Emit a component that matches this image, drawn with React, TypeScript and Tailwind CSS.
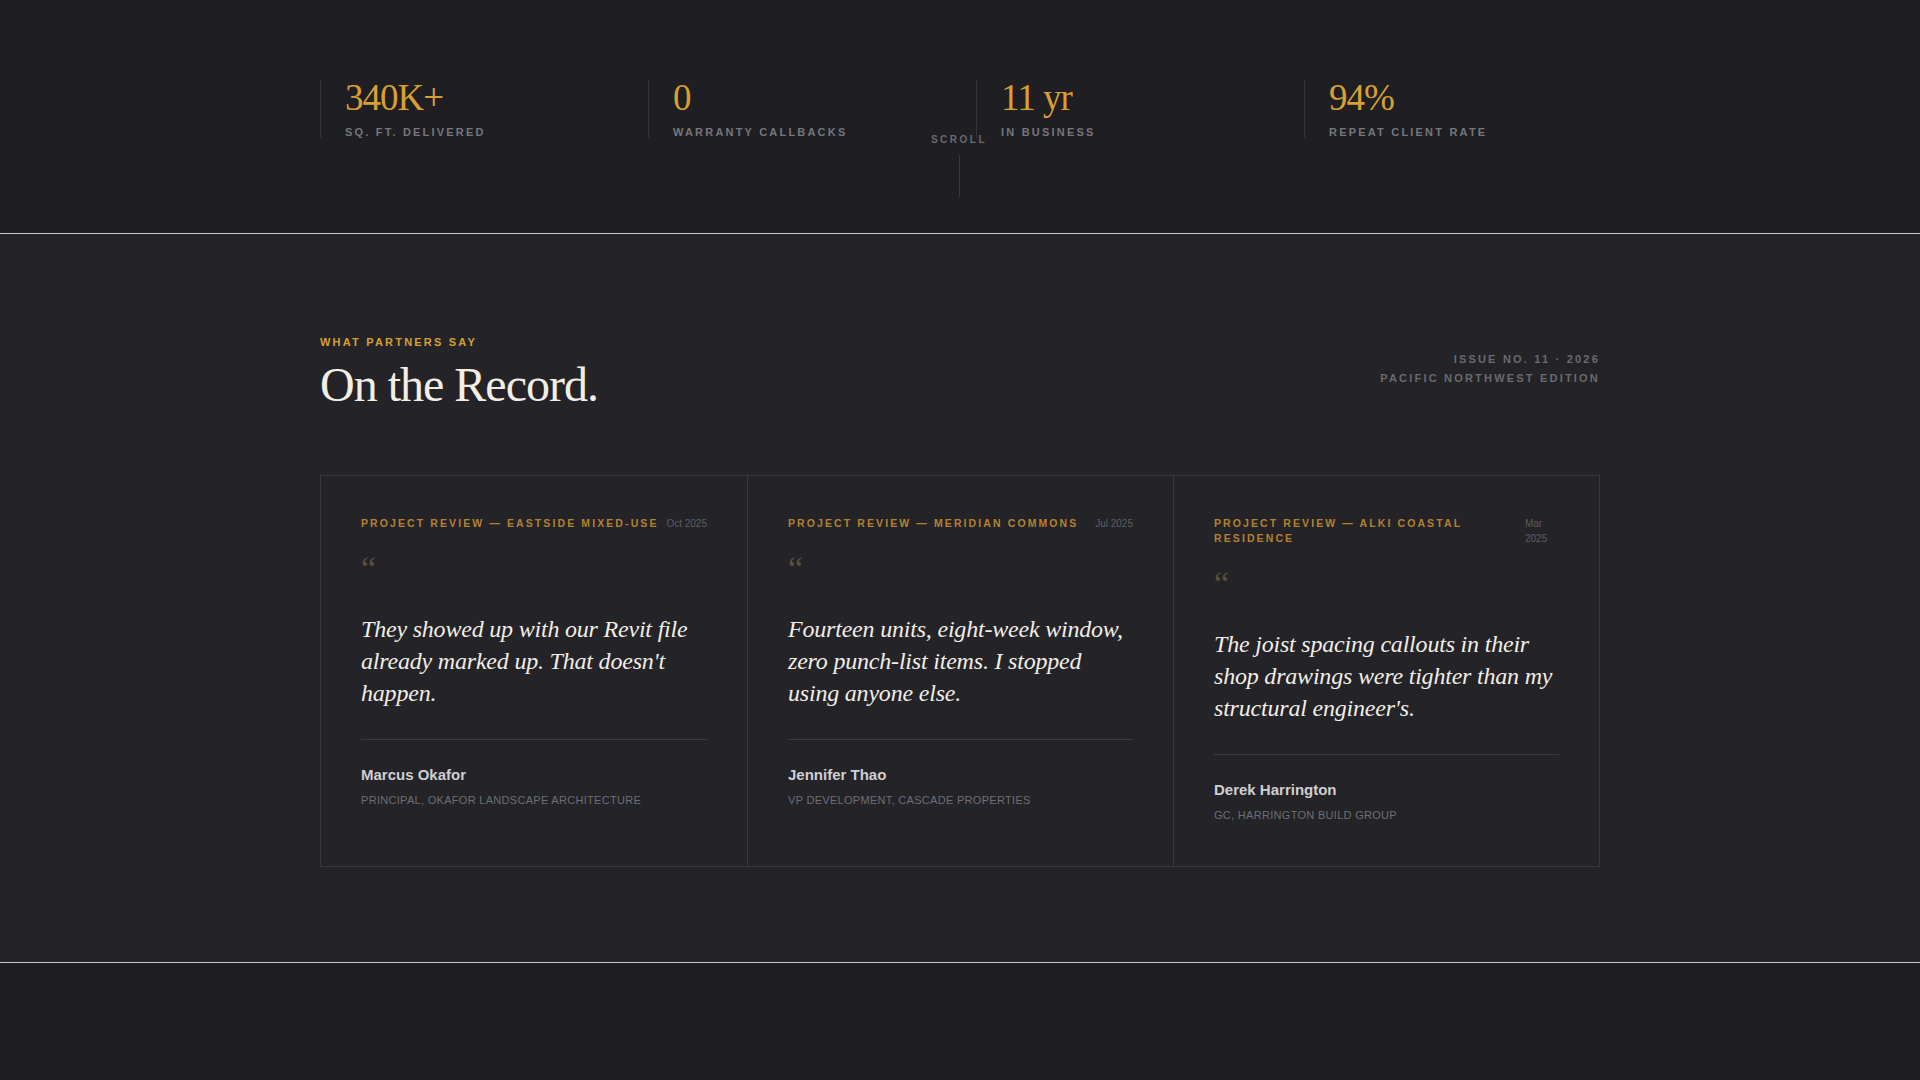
import React from 'react';

const stats = [
  { value: '340K+', label: 'SQ. FT. DELIVERED' },
  { value: '0', label: 'WARRANTY CALLBACKS' },
  { value: '11 yr', label: 'IN BUSINESS' },
  { value: '94%', label: 'REPEAT CLIENT RATE' },
];

const reviews = [
  {
    project: 'PROJECT REVIEW — EASTSIDE MIXED-USE',
    date: 'Oct 2025',
    quote: "They showed up with our Revit file already marked up. That doesn't happen.",
    name: 'Marcus Okafor',
    role: 'PRINCIPAL, OKAFOR LANDSCAPE ARCHITECTURE',
  },
  {
    project: 'PROJECT REVIEW — MERIDIAN COMMONS',
    date: 'Jul 2025',
    quote: 'Fourteen units, eight-week window, zero punch-list items. I stopped using anyone else.',
    name: 'Jennifer Thao',
    role: 'VP DEVELOPMENT, CASCADE PROPERTIES',
  },
  {
    project: 'PROJECT REVIEW — ALKI COASTAL RESIDENCE',
    date: 'Mar 2025',
    quote: "The joist spacing callouts in their shop drawings were tighter than my structural engineer's.",
    name: 'Derek Harrington',
    role: 'GC, HARRINGTON BUILD GROUP',
  },
];

const serif = { fontFamily: '"Liberation Serif", serif' };

export default function App() {
  return (
    <div className="min-h-[1080px] bg-[#1d1d22]" style={{ fontFamily: '"Liberation Sans", Arial, sans-serif' }}>
      {/* stats */}
      <section className="relative h-[234px] bg-[#1e1e23] border-b border-[#c9c9cc]">
        <div className="ml-[320px] pt-[80px] flex">
          {stats.map((s) => (
            <div key={s.label} className="w-[328px] border-l border-[#34343a] pl-6 h-[58px]">
              <div className="text-[37px] leading-[36px] text-[#d8a032] tracking-[-1px]" style={serif}>{s.value}</div>
              <div className="mt-[8px] text-[11px] font-bold tracking-[2.2px] text-[#76767c]">{s.label}</div>
            </div>
          ))}
        </div>
        <div className="absolute left-[934px] top-[132px] flex flex-col items-center w-[50px]">
          <span className="text-[10px] font-bold tracking-[2.5px] text-[#6a6a70]">SCROLL</span>
          <div className="mt-[8px] w-px h-[42px] bg-[#3a3a40]" />
        </div>
      </section>

      {/* testimonials */}
      <section className="h-[729px] bg-[#232328] border-b border-[#c9c9cc]">
        <div className="mx-auto w-[1280px]">
          <div className="pt-[100px] flex justify-between items-start">
            <div>
              <div className="text-[11px] font-bold tracking-[2.2px] text-[#d8a032]">WHAT PARTNERS SAY</div>
              <h2 className="mt-[6px] text-[48px] leading-[56px] text-[#f2eee6] tracking-[-1px]" style={serif}>On the Record.</h2>
            </div>
            <div className="pt-[16px] text-right text-[11px] font-bold tracking-[2.2px] text-[#6a6a70] leading-[19px]">
              <div>ISSUE NO. 11 · 2026</div>
              <div>PACIFIC NORTHWEST EDITION</div>
            </div>
          </div>

          <div className="mt-[62px] grid grid-cols-3 border border-[#38383e]">
            {reviews.map((r, i) => (
              <div key={r.name} className={`px-[40px] pt-[40px] pb-[42px] ${i > 0 ? 'border-l border-[#38383e]' : ''}`}>
                <div className="flex justify-between gap-[4px] items-start">
                  <span className="text-[10.5px] font-bold tracking-[2.1px] text-[#b38230] leading-[15px]">{r.project}</span>
                  <span className={`text-[10px] text-[#5e5e64] leading-[15px] ${i === 2 ? 'w-[30px] mr-[10px] ml-[40px]' : 'whitespace-nowrap'}`}>{r.date}</span>
                </div>
                <div className="mt-[18px] text-[34px] leading-[40px] text-[#5a4f3a]" style={serif}>&ldquo;</div>
                <p className="mt-[24px] text-[24px] leading-[32px] italic text-[#f2eee6] tracking-[-0.2px]" style={serif}>{r.quote}</p>
                <div className="mt-[30px] border-t border-[#3a3a40] pt-[24px]">
                  <div className="text-[15px] font-bold text-[#cfcfd2]">{r.name}</div>
                  <div className="mt-[6px] text-[11px] text-[#6f6f75] tracking-[0.3px]">{r.role}</div>
                </div>
              </div>
            ))}
          </div>
        </div>
      </section>
    </div>
  );
}
